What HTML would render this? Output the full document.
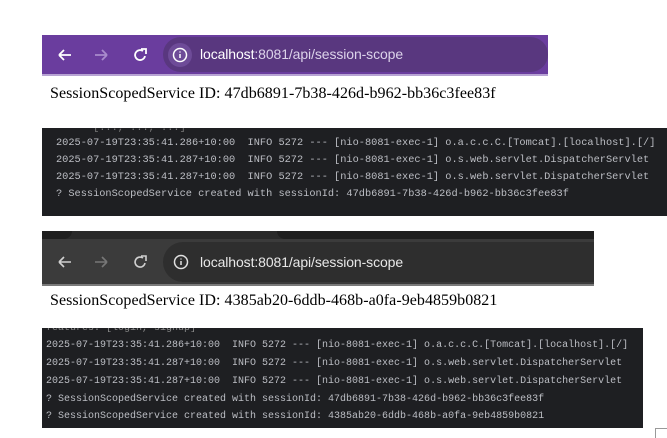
<!DOCTYPE html>
<html><head><style>
body{margin:0;width:667px;height:437px;background:#fff;position:relative;overflow:hidden;font-family:"Liberation Sans",sans-serif}
.abs{position:absolute}
.bar1{left:42px;top:35px;width:506px;height:39px;background:#6a3d9e;border-bottom:2px solid #b7a3d3}
.pill1{left:121px;top:2px;width:385px;height:35px;border-radius:18px;background:#59377f}
.bar2{left:42px;top:231px;width:552px;height:53px;background:#3b3b3b;border-bottom:2px solid #7a7a7a}
.tabs{left:0;top:0;width:552px;height:8px;background:#2a2a2a}
.tab{left:0;top:0;width:30px;height:8px;background:#1f1f1f;border-bottom-right-radius:8px}
.tab2{left:235px;top:0;width:317px;height:8px;background:#1f1f1f;border-bottom-left-radius:8px}
.pill2{left:121px;top:11px;width:431px;height:40px;border-radius:20px 0 0 20px;background:#2e2e2e}
.url{font-size:14px;color:#fff;white-space:nowrap;letter-spacing:-0.1px}
.url span{color:#dcd3ea}
.txt{font-family:"Liberation Serif",serif;font-size:16px;color:#000;white-space:nowrap;letter-spacing:0.05px}
.con{background:#1e1f22;font-family:"Liberation Mono",monospace;color:#bcbec4;white-space:pre;overflow:hidden}
.con div{position:absolute;left:14px}
</style></head><body>
<div class="abs bar1">
 <svg class="abs" style="left:14px;top:10px" width="110" height="20" viewBox="0 0 110 20">
  <path d="M3 10h12M3 10l5-5M3 10l5 5" stroke="#fff" stroke-width="1.8" fill="none"/>
  <path d="M39 10h12M51 10l-5-5M51 10l-5 5" stroke="#a88bcc" stroke-width="1.8" fill="none"/>
  <path d="M87 6a5 5 0 1 0 2 5" stroke="#fff" stroke-width="1.8" fill="none"/><path d="M85 4h5v5" stroke="#fff" stroke-width="1.8" fill="none"/>
 </svg>
 <div class="abs pill1">
  <svg class="abs" style="left:4px;top:5px" width="26" height="26"><circle cx="13" cy="13" r="12" fill="#6e4b98"/><circle cx="13" cy="13" r="6.5" stroke="#fff" stroke-width="1.5" fill="none"/><path d="M13 12v4M13 9.5v1" stroke="#fff" stroke-width="1.5"/></svg>
  <div class="abs url" style="left:37px;top:9px">localhost<span>:8081/api/session-scope</span></div>
 </div>
</div>
<div class="abs txt" style="left:50px;top:85px">SessionScopedService ID: 47db6891-7b38-426d-b962-bb36c3fee83f</div>
<div class="abs con" style="left:42px;top:128px;width:625px;height:88px;font-size:10.3px">
<div style="top:-6px;color:#777">      [..., ..., ...]</div>
<div style="top:9px">2025-07-19T23:35:41.286+10:00  INFO 5272 --- [nio-8081-exec-1] o.a.c.c.C.[Tomcat].[localhost].[/]</div>
<div style="top:26px">2025-07-19T23:35:41.287+10:00  INFO 5272 --- [nio-8081-exec-1] o.s.web.servlet.DispatcherServlet</div>
<div style="top:43px">2025-07-19T23:35:41.287+10:00  INFO 5272 --- [nio-8081-exec-1] o.s.web.servlet.DispatcherServlet</div>
<div style="top:60px">? SessionScopedService created with sessionId: 47db6891-7b38-426d-b962-bb36c3fee83f</div>
</div>
<div class="abs bar2">
 <div class="abs tabs"></div><div class="abs tab"></div><div class="abs tab2"></div>
 <svg class="abs" style="left:14px;top:21px" width="110" height="20" viewBox="0 0 110 20">
  <path d="M3 10h12M3 10l5-5M3 10l5 5" stroke="#d0d0d0" stroke-width="1.6" fill="none"/>
  <path d="M39 10h12M51 10l-5-5M51 10l-5 5" stroke="#777" stroke-width="1.6" fill="none"/>
  <path d="M87 6a5 5 0 1 0 2 5" stroke="#d0d0d0" stroke-width="1.6" fill="none"/><path d="M85 4h5v5" stroke="#d0d0d0" stroke-width="1.6" fill="none"/>
 </svg>
 <div class="abs pill2">
  <svg class="abs" style="left:5px;top:7px" width="26" height="26"><circle cx="13" cy="13" r="6.5" stroke="#e0e0e0" stroke-width="1.5" fill="none"/><path d="M13 12v4M13 9.5v1" stroke="#e0e0e0" stroke-width="1.5"/></svg>
  <div class="abs url" style="left:37px;top:12px;color:#e8e8e8">localhost:8081/api/session-scope</div>
 </div>
</div>
<div class="abs txt" style="left:50px;top:292px">SessionScopedService ID: 4385ab20-6ddb-468b-a0fa-9eb4859b0821</div>
<div class="abs con" style="left:42px;top:328px;width:601px;height:100px;font-size:10px">
<div style="top:-5px;left:4px;color:#888">features: [login, signup]</div>
<div style="top:12px;left:4px">2025-07-19T23:35:41.286+10:00  INFO 5272 --- [nio-8081-exec-1] o.a.c.c.C.[Tomcat].[localhost].[/]</div>
<div style="top:30px;left:4px">2025-07-19T23:35:41.287+10:00  INFO 5272 --- [nio-8081-exec-1] o.s.web.servlet.DispatcherServlet</div>
<div style="top:48px;left:4px">2025-07-19T23:35:41.287+10:00  INFO 5272 --- [nio-8081-exec-1] o.s.web.servlet.DispatcherServlet</div>
<div style="top:66px;left:4px">? SessionScopedService created with sessionId: 47db6891-7b38-426d-b962-bb36c3fee83f</div>
<div style="top:83px;left:4px">? SessionScopedService created with sessionId: 4385ab20-6ddb-468b-a0fa-9eb4859b0821</div>
</div>
<div class="abs" style="left:655px;top:428px;width:12px;height:9px;border:1px solid #999;border-right:none;border-bottom:none"></div>
</body></html>
